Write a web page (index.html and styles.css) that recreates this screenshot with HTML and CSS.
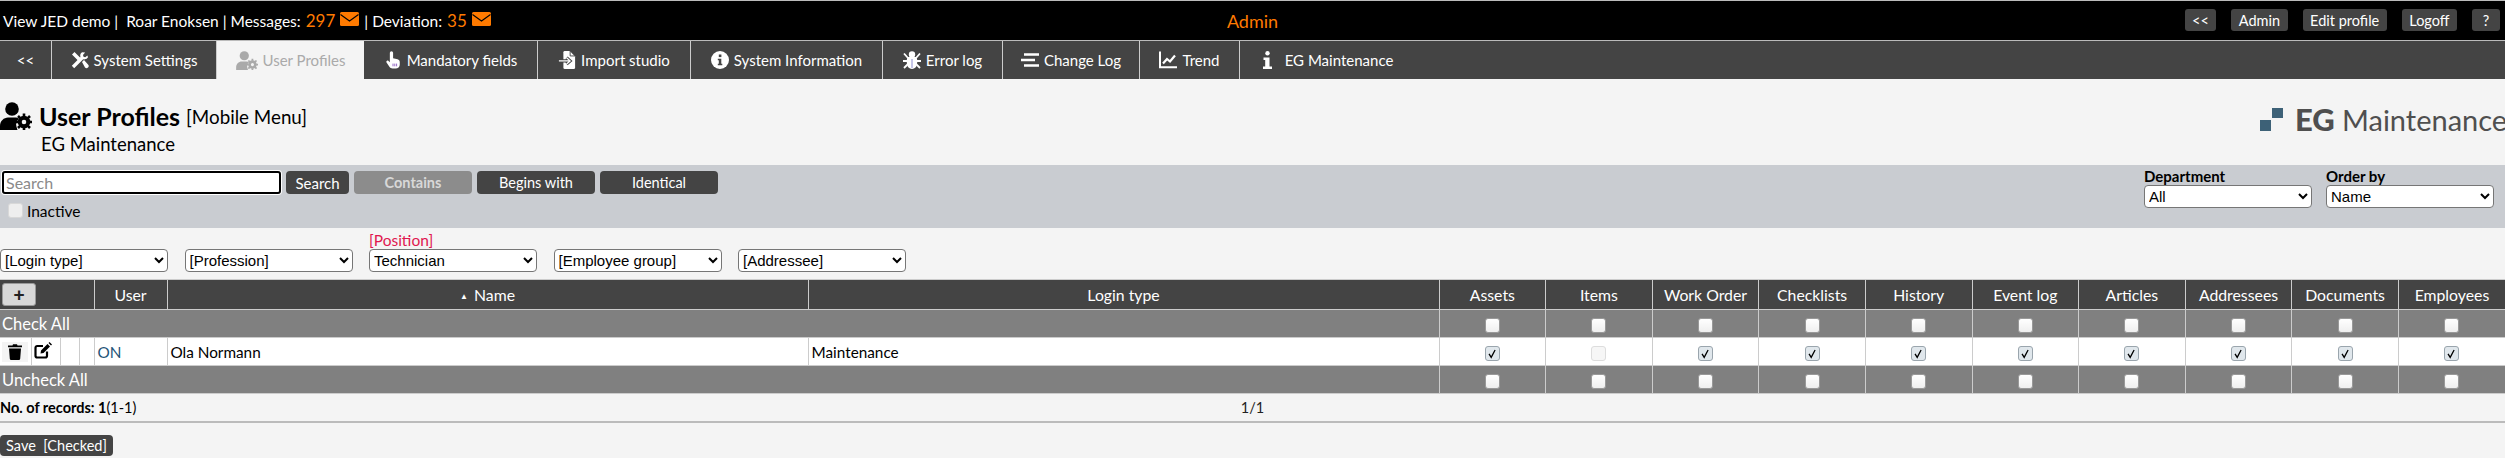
FILE: index.html
```html
<!DOCTYPE html>
<html lang="en">
<head>
<meta charset="utf-8">
<title>User Profiles</title>
<link rel="stylesheet" href="styles.css">
</head>
<body>
<svg class="defs" width="0" height="0" aria-hidden="true">
  <defs>
    <symbol id="usercog" viewBox="0 0 32 28">
      <circle cx="12" cy="7" r="6.8" fill="currentColor"/>
      <path d="M0 28v-4c0-5 4-8.500 8-8.500h7c1.500 0 3 .4 4 1.200-2.500 2-3.500 5-2.500 8l1 3.300z" fill="currentColor"/>
      <circle cx="24" cy="20" r="4.300" fill="none" stroke="currentColor" stroke-width="4"/>
      <path d="M24 11.500v17M15.500 20h17M18 14l12 12M30 14L18 26" stroke="currentColor" stroke-width="2.600" stroke-dasharray="3 11 3"/>
    </symbol>
    <symbol id="mail" viewBox="0 0 19 14">
      <rect width="19" height="14" rx="1.500" fill="#ff7a00"/>
      <path d="M0.500 2.500l9 6.500 9-6.500" fill="none" stroke="#000" stroke-width="1.100"/>
    </symbol>
  </defs>
</svg>

<header class="topbar">
  <div class="top-left"><span class="who">View JED demo |&nbsp; Roar Enoksen | Messages:</span> <span class="count">297</span> <svg class="mail"><use href="#mail"/></svg> <span>| Deviation:</span> <span class="count">35</span> <svg class="mail"><use href="#mail"/></svg></div>
  <div class="top-title">Admin</div>
  <nav class="top-actions">
    <a class="top-btn">&lt;&lt;</a>
    <a class="top-btn">Admin</a>
    <a class="top-btn">Edit profile</a>
    <a class="top-btn">Logoff</a>
    <a class="top-btn">?</a>
  </nav>
</header>

<nav class="tabs">
  <a class="tab">&lt;&lt;</a>
  <a class="tab">
    <svg class="ico" viewBox="0 0 18 18"><path d="M1 3.500L3.500 1l6 6-2.500 2.500z M11 11l2-2 4 4.500a2 2 0 0 1-3 3z" fill="#fff"/><path d="M2 16L12 6" stroke="#fff" stroke-width="3.400"/><path d="M11 1.200a4.200 4.200 0 0 0-.8 5.800 4.200 4.200 0 0 0 6.800-.8l-.6-1.800-2.200 1.800-1.700-.5-.5-1.800 2.100-2.300z" fill="#fff"/></svg>
    System Settings</a>
  <a class="tab active">
    <svg class="ico usr"><use href="#usercog"/></svg>
    User Profiles</a>
  <a class="tab">
    <svg class="ico" viewBox="0 0 16 20"><path d="M4.500 2a1.800 1.800 0 0 1 3.600 0v6l5 1.300c1.500.4 2.400 1.500 2.400 3v3c0 2.500-2 4.200-4.500 4.200H7.500c-1.500 0-2.700-.7-3.500-1.900L.8 12.800c-.9-1.300 1-2.900 2.200-1.700l1.500 1.500z" fill="#fff"/><path d="M8 14v3M10 14v3M12 14v3" stroke="#8a5ac0" stroke-width="1"/></svg>
    Mandatory fields</a>
  <a class="tab">
    <svg class="ico" viewBox="0 0 18 20"><path d="M5 1.500A1.500 1.500 0 0 1 6.500 0H12l6 6v12.500a1.500 1.500 0 0 1-1.500 1.500h-10A1.500 1.500 0 0 1 5 18.500z" fill="#fff"/><path d="M12.500 0v5.500H18" fill="none" stroke="#444" stroke-width="1"/><path d="M0 11h12M8.500 7.500L12.500 11l-4 3.500" fill="none" stroke="#444" stroke-width="3.500"/><path d="M0 11h12M8.500 7.500L12.500 11l-4 3.500" fill="none" stroke="#fff" stroke-width="1.400"/></svg>
    Import studio</a>
  <a class="tab">
    <svg class="ico" viewBox="0 0 18 18"><circle cx="9" cy="9" r="9" fill="#fff"/><rect x="7.800" y="3.500" width="2.600" height="2.600" fill="#444"/><path d="M6.800 7.800h3.500v5h1v1.500H6.800v-1.500h1v-3.500h-1z" fill="#444"/></svg>
    System Information</a>
  <a class="tab">
    <svg class="ico" viewBox="0 0 18 18"><circle cx="9" cy="3.500" r="3.200" fill="#fff"/><path d="M4.500 6h9c1 2 1.200 8-1 10.500-1 .9-2 1.300-3.500 1.500-1.500-.2-2.500-.6-3.500-1.500-2.200-2.500-2-8.500-1-10.500z" fill="#fff"/><path d="M1 2.500L5 7M17 2.500L13 7M0 10h5M18 10h-5M1 17l4-4M17 17l-4-4" stroke="#fff" stroke-width="1.800"/><path d="M9 8v9" stroke="#8c8cd0" stroke-width="1"/></svg>
    Error log</a>
  <a class="tab">
    <svg class="ico" viewBox="0 0 18 14"><path d="M3 1.500h15M0 7h14M3 12.500h15" stroke="#fff" stroke-width="2.600"/></svg>
    Change Log</a>
  <a class="tab">
    <svg class="ico" viewBox="0 0 18 17"><path d="M1 0v15.800h17" fill="none" stroke="#fff" stroke-width="2"/><path d="M4 12l4-4.500 3 2.500 5-6" fill="none" stroke="#fff" stroke-width="2.200"/></svg>
    Trend</a>
  <a class="tab last">
    <svg class="ico info" viewBox="0 0 9 18"><circle cx="4.500" cy="2.200" r="2.200" fill="#fff"/><path d="M0.500 6.500h6v9H9V18H0v-2.500h2.200V9H.5z" fill="#fff"/></svg>
    EG Maintenance</a>
</nav>

<section class="heading">
  <div class="heading-main">
    <h1 class="title"><svg class="title-ico"><use href="#usercog"/></svg><span>User Profiles</span> <small>[Mobile Menu]</small></h1>
    <div class="subtitle">EG Maintenance</div>
  </div>
  <div class="logo">
    <svg class="logo-mark" viewBox="0 0 24 23"><rect x="0" y="12" width="11" height="11" fill="#3d6177"/><rect x="12" y="0" width="11" height="10" fill="#3d6177"/></svg>
    <span class="logo-eg">EG</span><span class="logo-name">Maintenance</span>
  </div>
</section>

<section class="search-panel">
  <div class="search-left">
    <div class="search-row">
      <input class="search-input" type="text" placeholder="Search">
      <button class="btn btn-search">Search</button>
      <button class="btn btn-mode off">Contains</button>
      <button class="btn btn-mode">Begins with</button>
      <button class="btn btn-mode">Identical</button>
    </div>
    <label class="inactive"><input class="cb cb-light" type="checkbox"> Inactive</label>
  </div>
  <div class="search-right">
    <label class="field"><span>Department</span>
      <select class="sel"><option>All</option></select></label>
    <label class="field"><span>Order by</span>
      <select class="sel"><option>Name</option></select></label>
  </div>
</section>

<section class="filters">
  <label class="filter"><select class="sel"><option>[Login type]</option></select></label>
  <label class="filter"><select class="sel"><option>[Profession]</option></select></label>
  <label class="filter"><span class="filter-label">[Position]</span><select class="sel"><option>Technician</option></select></label>
  <label class="filter"><select class="sel"><option>[Employee group]</option></select></label>
  <label class="filter"><select class="sel"><option>[Addressee]</option></select></label>
</section>

<table class="grid">
  <colgroup>
    <col class="c-a"><col class="c-b"><col class="c-c"><col class="c-d"><col class="c-user"><col class="c-name"><col class="c-login">
    <col class="c-p"><col class="c-p"><col class="c-p"><col class="c-p"><col class="c-p"><col class="c-p"><col class="c-p"><col class="c-p"><col class="c-p"><col class="c-p">
  </colgroup>
  <thead>
    <tr>
      <th colspan="4" class="add-cell"><button class="add">+</button></th>
      <th>User</th>
      <th><span class="sort">▲</span> Name</th>
      <th>Login type</th>
      <th>Assets</th><th>Items</th><th>Work Order</th><th>Checklists</th><th>History</th><th>Event log</th><th>Articles</th><th>Addressees</th><th>Documents</th><th>Employees</th>
    </tr>
  </thead>
  <tbody>
    <tr class="bulk">
      <td colspan="7">Check All</td>
      <td><input class="cb" type="checkbox"></td><td><input class="cb" type="checkbox"></td><td><input class="cb" type="checkbox"></td><td><input class="cb" type="checkbox"></td><td><input class="cb" type="checkbox"></td><td><input class="cb" type="checkbox"></td><td><input class="cb" type="checkbox"></td><td><input class="cb" type="checkbox"></td><td><input class="cb" type="checkbox"></td><td><input class="cb" type="checkbox"></td>
    </tr>
    <tr class="row">
      <td class="act"><span class="trash"><svg class="act-ico" viewBox="0 0 14 16"><path d="M0 1.500h4.500L5 .3h4l.5 1.200H14V3.300H0z M1 4.500h12l-.8 10.200A1.400 1.400 0 0 1 10.800 16H3.200a1.400 1.400 0 0 1-1.400-1.300z" fill="#000"/></svg></span></td>
      <td class="act"><svg class="edit-ico" viewBox="0 0 18 17"><path d="M13 9.500v4.300a1.700 1.700 0 0 1-1.700 1.700H3.200a1.700 1.700 0 0 1-1.700-1.700V5.700A1.700 1.700 0 0 1 3.200 4H9" fill="none" stroke="#000" stroke-width="2.200"/><path d="M7 8.500L13.500 2l2.500 2.500L9.500 11l-3 .5z M14.500 1L15.500 0 18 2.500 17 3.500z" fill="#000"/></svg></td>
      <td></td><td></td>
      <td class="on">ON</td>
      <td class="txt">Ola Normann</td>
      <td class="txt">Maintenance</td>
      <td><input class="cb" type="checkbox" checked></td>
      <td><input class="cb cb-dis" type="checkbox"></td>
      <td><input class="cb" type="checkbox" checked></td><td><input class="cb" type="checkbox" checked></td><td><input class="cb" type="checkbox" checked></td><td><input class="cb" type="checkbox" checked></td><td><input class="cb" type="checkbox" checked></td><td><input class="cb" type="checkbox" checked></td><td><input class="cb" type="checkbox" checked></td><td><input class="cb" type="checkbox" checked></td>
    </tr>
    <tr class="bulk">
      <td colspan="7">Uncheck All</td>
      <td><input class="cb" type="checkbox"></td><td><input class="cb" type="checkbox"></td><td><input class="cb" type="checkbox"></td><td><input class="cb" type="checkbox"></td><td><input class="cb" type="checkbox"></td><td><input class="cb" type="checkbox"></td><td><input class="cb" type="checkbox"></td><td><input class="cb" type="checkbox"></td><td><input class="cb" type="checkbox"></td><td><input class="cb" type="checkbox"></td>
    </tr>
  </tbody>
</table>

<div class="records">
  <div><b>No. of records: 1</b>(1-1)</div>
  <div class="pages">1/1</div>
  <div></div>
</div>

<div class="save-row"><button class="btn btn-save">Save&nbsp; [Checked]</button></div>
</body>
</html>
```

FILE: styles.css
```css
* { box-sizing: border-box; }
html, body { margin: 0; padding: 0; }
body {
  width: 2505px;
  height: 458px;
  overflow: hidden;
  background: #f4f4f4;
  font-family: Lato, "Open Sans", sans-serif;
  font-size: 15px;
  color: #000;
}
.defs { position: absolute; }

/* top bar */
.topbar {
  height: 41px;
  background: #000;
  border-top: 1px solid #bbb;
  border-bottom: 1px solid #bbb;
  color: #fff;
  display: grid;
  grid-template-columns: 1fr auto 1fr;
  align-items: center;
}
.top-left { padding-left: 3px; white-space: nowrap; display: flex; align-items: center; gap: 5px; font-size: 15.500px; }
.count { color: #ff7a00; font-size: 17px; }
.mail { width: 19px; height: 14px; margin-top: -4px; }
.top-title { color: #ff7a00; font-size: 18px; }
.top-actions { display: flex; justify-content: flex-end; gap: 15px; padding-right: 5px; padding-bottom: 1px; }
.top-btn {
  height: 22px;
  padding: 0 7.500px;
  min-width: 28px;
  display: flex;
  align-items: center;
  justify-content: center;
  background: #444;
  border-radius: 3px;
  font-size: 14.500px;
}

/* tabs */
.tabs {
  height: 38px;
  background: #444;
  display: grid;
  grid-template-columns: 52px 165px 147px 174px 153px 192px 120px 137px 100px 176px 1fr;
}
.tab {
  display: flex;
  align-items: center;
  justify-content: center;
  gap: 5px;
  color: #fff;
  border-right: 1px solid #ccc;
  white-space: nowrap;
}
.tab.active { background: #f4f4f4; color: #aaa; border-right: 0; }
.tab.last { border-right: 0; }
.ico { width: 18px; height: 18px; flex: none; color: inherit; }
.ico.usr { width: 22px; height: 19px; }
.ico.info { width: 9px; margin-right: 8px; }

/* heading */
.heading {
  height: 86px;
  display: flex;
  justify-content: space-between;
}
.title { margin: 20px 0 0; font-size: 25px; line-height: 30px; font-weight: 700; display: flex; align-items: center; }
.title small { font-size: 18.800px; font-weight: 400; margin-left: 6px; margin-top: 3px; }
.title-ico { width: 32px; height: 28px; margin-right: 7px; }
.subtitle { margin: 1px 0 0 41px; font-size: 18.500px; line-height: 22px; }
.logo { width: 245px; height: 30px; margin-top: 25px; display: flex; align-items: center; color: #4f4f4f; white-space: nowrap; flex: none; }
.logo-mark { width: 24px; height: 23px; margin-right: 11px; flex: none; }
.logo-eg { font-size: 31px; font-weight: 900; width: 47px; flex: none; }
.logo-name { font-size: 29px; font-weight: 400; }

/* search panel */
.search-panel {
  height: 63px;
  background: #c9ccd1;
  display: flex;
  justify-content: space-between;
}
.search-row { display: flex; gap: 5px; padding: 6px 0 0 2px; }
.search-input {
  width: 279px;
  height: 23px;
  border: 2px solid #000;
  border-radius: 3px;
  background: #fff;
  box-shadow: 0 0 0 1px #fff;
  padding: 0 2px;
  font: inherit;
  font-size: 16px;
}
.search-input::placeholder { color: #8a8a8a; }
.btn {
  height: 23px;
  border: 0;
  border-radius: 4px;
  background: #444;
  color: #fff;
  font: inherit;
  font-size: 14.500px;
  padding: 0;
}
.btn-search { width: 63px; font-size: 15px; }
.btn-mode { width: 118px; }
.btn-mode.off { background: #8c8c8c; color: #d8d8d8; font-weight: 700; }
.inactive { display: flex; align-items: center; gap: 4px; margin: 10px 0 0 8px; line-height: 14px; font-size: 15.500px; }
.search-right { display: flex; gap: 14px; padding: 3px 11px 0 0; }
.field { display: flex; flex-direction: column; width: 168px; font-weight: 700; font-size: 15px; line-height: 17px; }
.sel {
  width: 168px;
  height: 23px;
  background-color: #fff;
  border: 1px solid #767676;
  border-radius: 4px;
  font-family: "Liberation Sans", Arial, sans-serif;
  font-size: 15px;
  font-weight: 400;
  color: #000;
}

/* filters */
.filters {
  height: 51px;
  display: flex;
  align-items: flex-end;
  gap: 16.500px;
  padding-bottom: 7px;
}
.filter { display: flex; flex-direction: column; width: 168px; }
.filter-label { color: #e0174f; font-size: 15.500px; line-height: 17px; }

/* table */
.grid {
  width: 2505px;
  table-layout: fixed;
  border-collapse: collapse;
  border-top: 1px solid #ddd;
}
.c-a { width: 31px; }
.c-b { width: 29px; }
.c-c { width: 19px; }
.c-d { width: 15px; }
.c-user { width: 73px; }
.c-name { width: 641px; }
.c-login { width: 631px; }
.c-p { width: 106.600px; }
.grid th, .grid td { border: 1px solid #ccc; padding: 0; text-align: center; }
.grid tr > :first-child { border-left: 0; }
.grid tr > :last-child { border-right: 0; }
.grid th { height: 30px; background: #444; color: #fff; font-weight: 400; font-size: 15.800px; }
.grid td { height: 28px; font-size: 15.300px; line-height: 18px; }
.grid th.add-cell { text-align: left; }
.add {
  width: 34px;
  height: 23px;
  margin-left: 2px;
  display: block;
  border: 1px solid #999;
  border-radius: 3px;
  background: #d8d8d8;
  color: #222;
  font-family: "Liberation Sans", sans-serif;
  font-size: 19px;
  font-weight: 700;
  line-height: 19px;
  padding: 0;
}
.sort { font-size: 8px; vertical-align: 2px; margin-right: 2px; }
.bulk td { background: #808080; color: #fff; }
.bulk td:first-child { text-align: left; padding-left: 2px; font-size: 16.500px; }
.row td { background: #fff; }
.row .txt { text-align: left; padding-left: 3px; }
.row .on { text-align: left; padding-left: 3px; color: #1f5578; }
.act { vertical-align: middle; }
.trash { display: flex; align-items: center; justify-content: center; width: 26px; height: 20px; margin-left: 2px; background: #f4f4f4; }
.act-ico { width: 14px; height: 16px; display: block; }
.edit-ico { width: 18px; height: 17px; display: block; margin: -3px 0 0 2px; }

/* checkboxes */
.cb {
  appearance: none;
  -webkit-appearance: none;
  width: 15px;
  height: 15px;
  margin: 0;
  display: inline-block;
  vertical-align: middle;
  background: linear-gradient(#fff, #efefef);
  border: 1px solid #bbb;
  border-radius: 3px;
}
.bulk .cb { border-color: #999; }
.cb-dis { background: #f6f6f6; border-color: #ddd; }
.cb-light { background: #eee; border-color: #d8d8d8; flex: none; margin-top: -2px; }
.cb:checked {
  background: #e0e7ec url("data:image/svg+xml,%3Csvg xmlns='http://www.w3.org/2000/svg' viewBox='0 0 15 15'%3E%3Cpath d='M3.500 8l2.500 4 4.500-8.500' fill='none' stroke='%23000' stroke-width='1.500'/%3E%3C/svg%3E") center no-repeat;
  border-color: #9aa5ad;
}

/* footer */
.records {
  height: 29px;
  border-bottom: 2px solid #bbb;
  display: grid;
  grid-template-columns: 1fr auto 1fr;
  align-items: center;
  font-size: 14.500px;
}
.records .pages { color: #222; }
.save-row { padding-top: 12px; }
.btn-save { width: 113px; height: 21px; }
```
